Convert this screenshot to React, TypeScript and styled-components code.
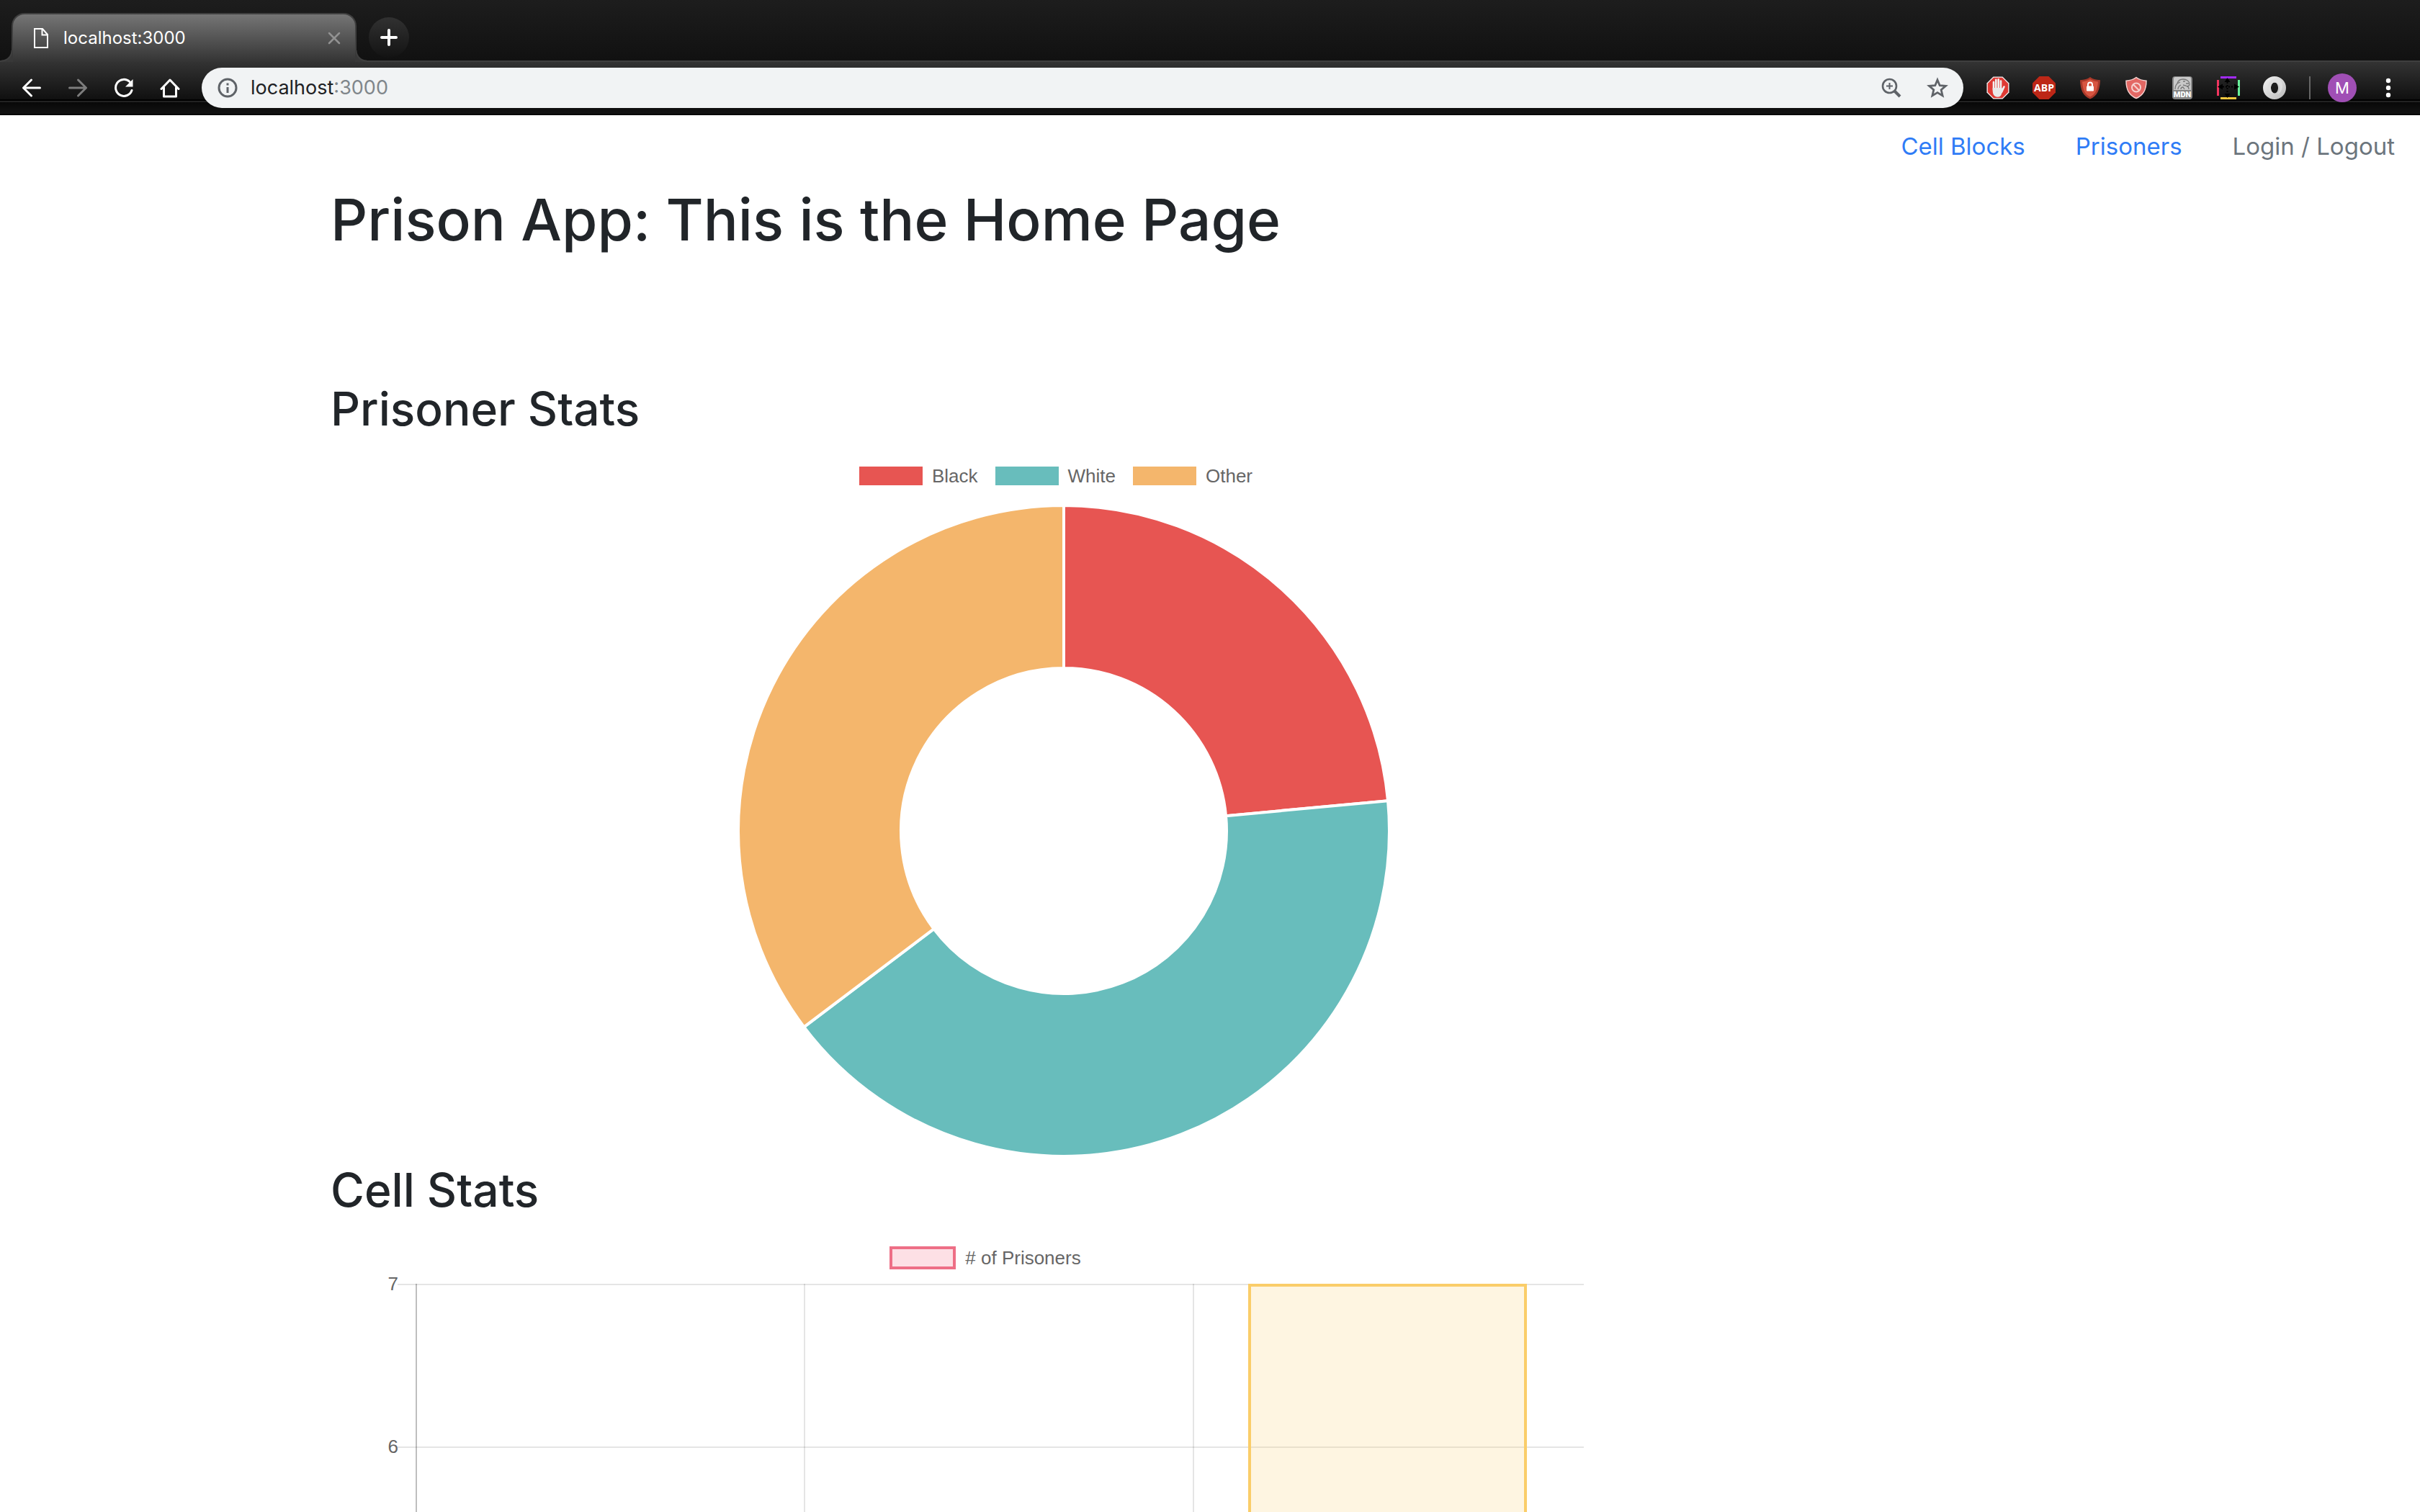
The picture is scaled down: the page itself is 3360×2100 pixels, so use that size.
import React from "react";
import styled, { createGlobalStyle } from "styled-components";

const GlobalStyle = createGlobalStyle`
  *, *::before, *::after { box-sizing: border-box; }
  body { margin: 0; background: #fff; font-family: Inter, "Liberation Sans", sans-serif; }
  h1, h2, p, ul, figure { margin: 0; padding: 0; }
  ul { list-style: none; }
  button { border: 0; padding: 0; background: none; color: inherit; font: inherit; }
  svg { display: block; }
`;

/* ---------- browser window ---------- */

const Window = styled.div`
  display: flex;
  flex-direction: column;
  height: 100vh;
  overflow: hidden;
`;

const TabStrip = styled.div`
  display: flex;
  align-items: flex-start;
  gap: 17px;
  height: 86px;
  flex: none;
  padding: 18px 16px 0;
  border-bottom: 2px solid #3f3f3f;
  background: linear-gradient(#1d1d1d, #111);
`;

const Tab = styled.div`
  position: relative;
  display: flex;
  align-items: center;
  width: 479px;
  height: 68px;
  padding: 0 20px 0 28px;
  border: 2px solid #3f3f3f;
  border-bottom: 0;
  border-radius: 18px 18px 0 0;
  background: linear-gradient(#757575, #343434);
  color: #fff;

  &::before,
  &::after {
    content: "";
    position: absolute;
    bottom: 0;
    width: 16px;
    height: 16px;
  }
  &::before {
    left: -16px;
    background: radial-gradient(circle at 0 0, transparent 13px, #3f3f3f 14px, #3f3f3f 15px, #383838 16px);
  }
  &::after {
    right: -16px;
    background: radial-gradient(circle at 100% 0, transparent 13px, #3f3f3f 14px, #3f3f3f 15px, #383838 16px);
  }
`;

const TabTitle = styled.span`
  flex: 1;
  margin-left: 20px;
  font-size: 24px;
  line-height: 32px;
`;

const NewTab = styled.button`
  display: grid;
  place-items: center;
  width: 56px;
  height: 56px;
  margin-top: 6px;
  border-radius: 50%;
  background: linear-gradient(#313131, #131313);
`;

const Toolbar = styled.div`
  display: flex;
  align-items: center;
  flex: none;
  height: 74px;
  padding: 8px 12px 10px;
  background: linear-gradient(
    #333 0, #101010 52px,
    #000 52px, #000 54px,
    #222 54px, #222 56px,
    #080808 56px, #131313 72px,
    #000 72px
  );
`;

const ToolButton = styled.button<{ $color?: string }>`
  display: grid;
  place-items: center;
  width: 64px;
  height: 56px;
  flex: none;
  color: ${(p) => p.$color ?? "#fff"};
`;

const AddressBar = styled.label`
  display: flex;
  align-items: center;
  flex: 1;
  height: 56px;
  margin: 0 16px 0 12px;
  padding: 0 4px 0 22px;
  border-radius: 28px;
  background: #f1f3f4;
  font-size: 27px;
  line-height: 36px;
  color: #202124;
`;

const AddressInput = styled.input`
  field-sizing: content;
  margin: 0 0 0 18px;
  padding: 0;
  border: 0;
  outline: 0;
  background: none;
  font: inherit;
  color: inherit;
`;

const AddressPort = styled.span`
  flex: 1;
  color: #80868b;
`;

const ToolDivider = styled.span`
  width: 2px;
  height: 32px;
  margin: 0 24px 0 16px;
  background: #666;
`;

const Avatar = styled.button`
  width: 40px;
  height: 40px;
  margin-right: 12px;
  border-radius: 50%;
  background: #a04fb5;
  color: #fff;
  font-size: 22px;
  line-height: 40px;
  text-align: center;
`;

/* ---------- page ---------- */

const Page = styled.div`
  flex: 1;
  min-height: 0;
  overflow: hidden;
  background: #fff;
  color: #212529;
`;

const Nav = styled.nav`
  display: flex;
  justify-content: flex-end;
`;

const NavLink = styled.a<{ $muted?: boolean }>`
  padding: 17px 35px 18px;
  font-size: 33px;
  line-height: 53px;
  text-decoration: none;
  color: ${(p) => (p.$muted ? "#6c757d" : "#2f7cf6")};
`;

const Container = styled.main`
  max-width: 2508px;
  margin: 0 auto;
  padding: 4px 33px 0;
`;

const Title = styled.h1`
  margin-bottom: 167px;
  font-size: 80px;
  font-weight: 500;
  line-height: 106px;
`;

const SectionTitle = styled.h2`
  margin-bottom: 15px;
  font-size: 64px;
  font-weight: 500;
  line-height: 86px;
`;

const PrisonerChart = styled.figure`
  max-width: 2036px;
  margin-bottom: 2px;
`;

const CellChart = styled.figure`
  max-width: 1740px;
  padding-left: 78px;
`;

const Legend = styled.ul<{ $compact?: boolean }>`
  display: flex;
  justify-content: center;
  align-items: center;
  gap: 24px;
  height: ${(p) => (p.$compact ? 70 : 74)}px;
  padding: ${(p) => (p.$compact ? "2px 0 0" : "0 22px 4px 0")};
`;

const LegendItem = styled.li`
  display: flex;
  align-items: center;
  gap: 13px;
  font-family: "Liberation Sans", Arial, sans-serif;
  font-size: 26px;
  line-height: 30px;
  color: #666;
`;

const Swatch = styled.span<{ $fill: string; $line?: string }>`
  width: ${(p) => (p.$line ? 92 : 88)}px;
  height: ${(p) => (p.$line ? 32 : 26)}px;
  background: ${(p) => p.$fill};
  border: ${(p) => (p.$line ? `4px solid ${p.$line}` : "0")};
`;

const Doughnut = styled.svg`
  width: 908px;
  height: 908px;
  margin: 0 auto;
`;

const BarPlot = styled.svg`
  width: 100%;
  height: auto;
  overflow: visible;
  font-family: "Liberation Sans", Arial, sans-serif;
  font-size: 26px;
`;

const groups = [
  { label: "Black", value: 4, color: "#e75552" },
  { label: "White", value: 7, color: "#68bdbc" },
  { label: "Other", value: 6, color: "#f4b66c" },
];

const point = (radius: number, turn: number) => {
  const a = turn * Math.PI * 2;
  return `${454 + radius * Math.sin(a)} ${454 - radius * Math.cos(a)}`;
};

function DoughnutChart() {
  const total = groups.reduce((sum, g) => sum + g.value, 0);
  let start = 0;
  return (
    <Doughnut viewBox="0 0 908 908" role="img" aria-label="Prisoners by group">
      {groups.map((g) => {
        const from = start / total;
        start += g.value;
        const to = start / total;
        const large = to - from > 0.5 ? 1 : 0;
        return (
          <path
            key={g.label}
            fill={g.color}
            stroke="#fff"
            strokeWidth="4"
            strokeLinejoin="bevel"
            d={`M${point(452, from)}A452 452 0 ${large} 1 ${point(452, to)}L${point(226, to)}A226 226 0 ${large} 0 ${point(226, from)}Z`}
          />
        );
      })}
    </Doughnut>
  );
}

function BarChart() {
  return (
    <BarPlot viewBox="0 0 1662 1600" role="img" aria-label="Prisoners per cell block">
      <g stroke="#000" strokeOpacity="0.1" strokeWidth="2">
        {[7, 6, 5, 4, 3, 2, 1].map((n) => (
          <line key={n} x1="15" x2="1662" y1={3 + (7 - n) * 226} y2={3 + (7 - n) * 226} />
        ))}
        <line x1="41" x2="41" y1="2" y2="1585" strokeOpacity="0.25" />
        {[580, 1120].map((x) => (
          <line key={x} x1={x} x2={x} y1="2" y2="1585" />
        ))}
      </g>
      <text x="16" y="11" textAnchor="end" fill="#666">7</text>
      <text x="16" y="237" textAnchor="end" fill="#666">6</text>
      <rect x="1198" y="4" width="383" height="1581" fill="#facd69" fillOpacity="0.2" stroke="#facd69" strokeWidth="4" />
    </BarPlot>
  );
}

/* ---------- icons ---------- */

const line = { fill: "none", stroke: "currentColor", strokeWidth: 3, strokeLinecap: "round", strokeLinejoin: "round" } as const;

const FileIcon = () => (
  <svg width="22" height="30" viewBox="0 0 22 30" fill="none" stroke="#fff" strokeWidth="2">
    <path d="M2 2h11l7 8v18H2z" />
    <path d="M12.500 2v8.500H20" />
  </svg>
);
const CloseIcon = () => (
  <svg width="18" height="18" viewBox="0 0 18 18" stroke="#929292" strokeWidth="2.500" strokeLinecap="round">
    <path d="M2 2l14 14M16 2L2 16" />
  </svg>
);
const PlusIcon = () => (
  <svg width="24" height="24" viewBox="0 0 24 24" stroke="#fff" strokeWidth="4" strokeLinecap="round">
    <path d="M12 2v20M2 12h20" />
  </svg>
);
const ArrowIcon = ({ forward }: { forward?: boolean }) => (
  <svg width="28" height="28" viewBox="0 0 28 28" {...line}>
    <path d={forward ? "M2.500 14h23M14.500 3l11 11-11 11" : "M25.500 14h-23M13.500 3l-11 11 11 11"} />
  </svg>
);
const ReloadIcon = () => (
  <svg width="28" height="28" viewBox="0 0 28 28" {...line}>
    <path d="M25 17.500A11.500 11.500 0 1 1 22 5.500" />
    <path d="M26.500 2v10.500H16z" fill="currentColor" stroke="none" />
  </svg>
);
const HomeIcon = () => (
  <svg width="28" height="28" viewBox="0 0 28 28" {...line}>
    <path d="M2 15.500L14 3l12 12.500M5.500 13.500V26h17V13.500" />
  </svg>
);
const InfoIcon = () => (
  <svg width="28" height="28" viewBox="0 0 28 28" fill="none" stroke="#5f6368" strokeWidth="3">
    <circle cx="14" cy="14" r="12" />
    <path d="M14 13v8M14 7.500v3" />
  </svg>
);
const ZoomIcon = () => (
  <svg width="28" height="28" viewBox="0 0 28 28" fill="none" stroke="#5f6368">
    <circle cx="11.500" cy="11.500" r="9.500" strokeWidth="2.600" />
    <path d="M11.500 7v9M7 11.500h9" strokeWidth="2" />
    <path d="M18 18l8 8" strokeWidth="4" />
  </svg>
);
const StarIcon = () => (
  <svg width="30" height="30" viewBox="0 0 30 30" fill="none" stroke="#5f6368" strokeWidth="2.800">
    <path d="M15 4l3.200 7.700 8.300.7-6.300 5.400 1.900 8.100L15 21.600l-7.100 4.300 1.900-8.100-6.300-5.400 8.300-.7z" />
  </svg>
);
const HandIcon = () => (
  <svg width="32" height="32" viewBox="0 0 32 32">
    <path d="M9.500.5h13l9 9v13l-9 9h-13l-9-9v-13z" fill="#f6f6f6" />
    <path d="M10 1.800h12L30.200 10v12L22 30.200H10L1.800 22V10z" fill="#df3a34" />
    <g stroke="#f1f1f1" strokeWidth="2.600" strokeLinecap="round" fill="none">
      <path d="M10 19V8M13.300 17V4.700M16.700 17V4.300M20 18V6.500M21 22l3.500-7.500" />
    </g>
    <path d="M8.700 16h12.600l1.700 3-2 5.500c-1 3-2.500 4.200-5.500 4.200-4.500 0-6.800-3.700-6.800-8.700z" fill="#e9e9e9" />
  </svg>
);
const AbpIcon = () => (
  <svg width="32" height="32" viewBox="0 0 32 32">
    <path d="M9.500 0h13L32 9.500v13L22.500 32h-13L0 22.500v-13z" fill="#bd2717" />
    <text x="16" y="21" textAnchor="middle" fontFamily="Open Sans, sans-serif" fontWeight="700" fontSize="14" fill="#fff">ABP</text>
  </svg>
);
const LockShieldIcon = () => (
  <svg width="30" height="32" viewBox="0 0 30 32">
    <path d="M15 1c3 2.500 8 4 14 4.300C28.500 19 25 27.500 15 31.500 5 27.500 1.500 19 1 5.300 7 5 12 3.500 15 1z" fill="#a9392a" />
    <path d="M15 4c3 2 6.500 3 11 3.400C25.300 18 22.500 25 15 28.500 7.500 25 4.700 18 4 7.400 8.500 7 12 6 15 4z" fill="#d85541" />
    <path d="M12 14v-2.500a3 3 0 0 1 6 0V14" fill="none" stroke="#fff" strokeWidth="2" />
    <rect x="10" y="13.500" width="10" height="7" rx="1" fill="#fff" />
  </svg>
);
const BlockShieldIcon = () => (
  <svg width="32" height="32" viewBox="0 0 32 32">
    <path d="M16 1.500c4 3 8 4.300 14 4.700C30 17.500 27 26 16 30.500 5 26 2 17.500 2 6.200 8 5.800 12 4.500 16 1.500z" fill="#e36864" stroke="#f5d4d2" strokeWidth="1.500" />
    <circle cx="16" cy="15.500" r="6" fill="none" stroke="#f6d2d0" strokeWidth="2" />
    <path d="M11.800 11.300l8.400 8.400" stroke="#f6d2d0" strokeWidth="2" />
  </svg>
);
const MdnIcon = () => (
  <svg width="28" height="32" viewBox="0 0 28 32">
    <rect width="28" height="32" rx="4" fill="#858585" />
    <path d="M2 3a2 2 0 0 1 2-2h20a2 2 0 0 1 2 2v16H2z" fill="#c9c9c9" />
    <path d="M4 18c0-4 1-6 3-8 1-4 4-6 8-6 5 0 9 3 9 7 0 3-3 3-5 2l-4-1M8 18c0-3 2-5 4-6M12 18c0-2 1-3 3-3l2 3M7 10l4-2M15 7h3M19 10h4M20 14c2 0 3 2 3 4" fill="none" stroke="#777" strokeWidth="1.300" />
    <text x="14" y="29" textAnchor="middle" fontFamily="Roboto, sans-serif" fontWeight="900" fontSize="11" fill="#fff">MDN</text>
  </svg>
);
const ResizerIcon = () => (
  <svg width="32" height="32" viewBox="0 0 32 32">
    <path d="M5 0h22v3H5z" fill="#a22bfa" />
    <path d="M5 29h22v3H5z" fill="#f3c83f" />
    <path d="M0 5h3v22H0z" fill="#f23560" />
    <path d="M29 5h3v22h-3z" fill="#69f29b" />
    <path d="M14.500 2l4 6h-8zM14.500 30l4-6h-8zM1 14.500l7-4v8zM31 14.500l-7-4v8z" fill="#000" />
    <path d="M14.500 8v16M8 14.500h16" stroke="#000" strokeWidth="2" strokeDasharray="2 2" />
  </svg>
);
const RingIcon = () => (
  <svg width="32" height="32" viewBox="0 0 32 32">
    <defs>
      <linearGradient id="ring" x1="0" y1="0" x2="1" y2="1">
        <stop offset="0" stopColor="#f4f4f4" />
        <stop offset="1" stopColor="#b9b9b9" />
      </linearGradient>
    </defs>
    <path d="M16 0a16 16 0 1 1 0 32 16 16 0 0 1 0-32zm0 8.500c-3 0-5 3.500-5 7.500s2 7.500 5 7.500 5-3.500 5-7.500-2-7.500-5-7.500z" fill="url(#ring)" fillRule="evenodd" />
    <path d="M16 8.500c7-1 11 8 4 16.500 8-3 10-18 1-21C13 2 6 8 7 17c1 5 4 7 9 6.500-4-1-5-4-5-7.500s2-7.500 5-7.500z" fill="#dedede" />
  </svg>
);
const MenuIcon = () => (
  <svg width="8" height="28" viewBox="0 0 8 28" fill="#fff">
    <circle cx="4" cy="4" r="3.200" />
    <circle cx="4" cy="14" r="3.200" />
    <circle cx="4" cy="24" r="3.200" />
  </svg>
);

const extensions = [
  { name: "AdBlock", Icon: HandIcon },
  { name: "Adblock Plus", Icon: AbpIcon },
  { name: "Secure connection", Icon: LockShieldIcon },
  { name: "Tracker blocker", Icon: BlockShieldIcon },
  { name: "MDN search", Icon: MdnIcon },
  { name: "Window resizer", Icon: ResizerIcon },
  { name: "JSON viewer", Icon: RingIcon },
];

export default function App() {
  return (
    <Window>
      <GlobalStyle />
      <TabStrip>
        <Tab>
          <FileIcon />
          <TabTitle>localhost:3000</TabTitle>
          <button aria-label="Close tab"><CloseIcon /></button>
        </Tab>
        <NewTab aria-label="New tab"><PlusIcon /></NewTab>
      </TabStrip>
      <Toolbar>
        <ToolButton aria-label="Back"><ArrowIcon /></ToolButton>
        <ToolButton aria-label="Forward" $color="#7d7d7d"><ArrowIcon forward /></ToolButton>
        <ToolButton aria-label="Reload"><ReloadIcon /></ToolButton>
        <ToolButton aria-label="Home"><HomeIcon /></ToolButton>
        <AddressBar>
          <InfoIcon />
          <AddressInput aria-label="Address" defaultValue="localhost" />
          <AddressPort>:3000</AddressPort>
          <ToolButton aria-label="Zoom"><ZoomIcon /></ToolButton>
          <ToolButton aria-label="Bookmark"><StarIcon /></ToolButton>
        </AddressBar>
        {extensions.map(({ name, Icon }) => (
          <ToolButton key={name} aria-label={name}><Icon /></ToolButton>
        ))}
        <ToolDivider />
        <Avatar>M</Avatar>
        <ToolButton aria-label="Menu"><MenuIcon /></ToolButton>
      </Toolbar>
      <Page>
        <Nav>
          <NavLink href="#cells">Cell Blocks</NavLink>
          <NavLink href="#prisoners">Prisoners</NavLink>
          <NavLink href="#login" $muted>Login / Logout</NavLink>
        </Nav>
        <Container>
          <Title>Prison App: This is the Home Page</Title>
          <SectionTitle>Prisoner Stats</SectionTitle>
          <PrisonerChart>
            <Legend>
              {groups.map((g) => (
                <LegendItem key={g.label}>
                  <Swatch $fill={g.color} />
                  {g.label}
                </LegendItem>
              ))}
            </Legend>
            <DoughnutChart />
          </PrisonerChart>
          <SectionTitle>Cell Stats</SectionTitle>
          <CellChart>
            <Legend $compact>
              <LegendItem>
                <Swatch $fill="#fde0e5" $line="#ee6f86" />
                # of Prisoners
              </LegendItem>
            </Legend>
            <BarChart />
          </CellChart>
        </Container>
      </Page>
    </Window>
  );
}
